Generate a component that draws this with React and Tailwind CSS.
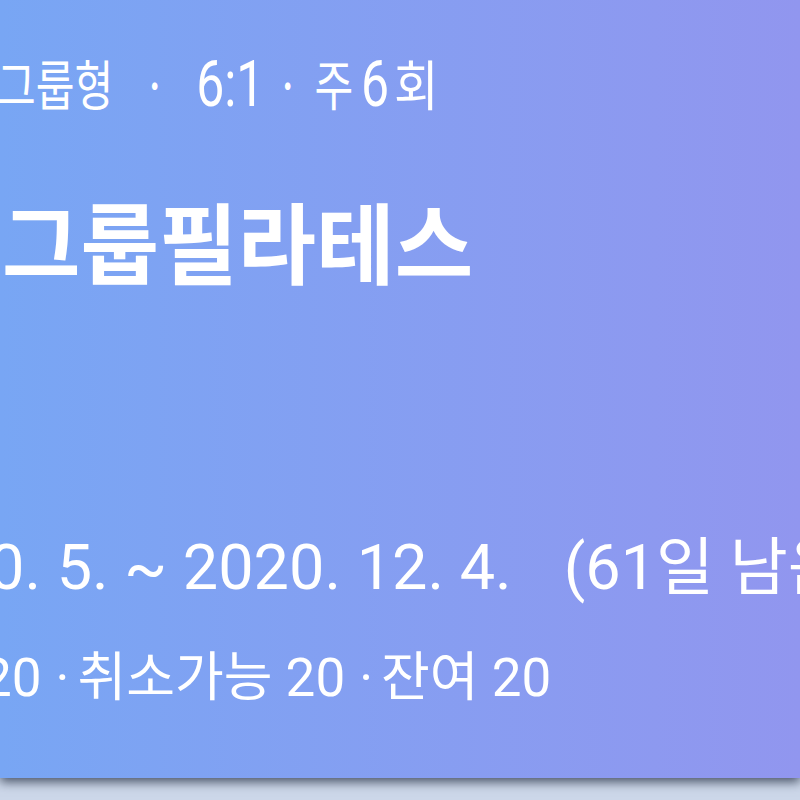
import React from 'react';

const Dot = ({ className }) => <span className={className}>·</span>;

const ClassCard = () => {
  return (
    <div className="w-[800px] h-[800px] overflow-hidden bg-[#ccd7e9]">
      <div className="relative h-[778px] bg-linear-to-r from-[#78a6f4] to-[#9196ef] shadow-[0_4px_10px_rgba(30,40,60,0.75)] text-white overflow-hidden">
        {/* 수업 정보 */}
        <div className="pt-[53px] ml-[-3px] flex items-baseline font-['Noto_Sans_CJK_KR','Noto_Sans',sans-serif] text-[54px] leading-none whitespace-nowrap origin-left scale-x-[0.78]">
          <span>그룹형</span>
          <Dot className="ml-[38px]" />
          <span className="ml-[38px] font-['Roboto','Noto_Sans_CJK_KR',sans-serif] text-[64px]">6:1</span>
          <Dot className="ml-[15px]" />
          <span className="ml-[19px]">주</span>
          <span className="ml-[10px] font-['Roboto','Noto_Sans_CJK_KR',sans-serif] text-[64px]">6</span>
          <span className="ml-[6px] scale-x-[1.15] origin-left inline-block">회</span>
        </div>

        {/* 수업명 */}
        <div className="mt-[78px] ml-[2px] font-['Noto_Sans_CJK_KR','Noto_Sans',sans-serif] text-[88px] font-bold leading-none whitespace-nowrap origin-left scale-x-[0.97]">
          그룹필라테스
        </div>

        {/* 기간 */}
        <div className="mt-[253px] ml-[-11px] flex font-['Roboto','Noto_Sans_CJK_KR',sans-serif] text-[63px] leading-none whitespace-nowrap">
          <span>0. 5. ~ 2020. 12. 4.</span>
          <span className="ml-[52px]">(61일 남음)</span>
        </div>

        {/* 인원 */}
        <div className="mt-[53px] ml-[-18px] font-['Roboto','Noto_Sans_CJK_KR',sans-serif] text-[53px] leading-none whitespace-nowrap">
          <span>20</span>
          <Dot className="ml-[14px] mr-[8px]" />
          <span>취소가능 20</span>
          <Dot className="ml-[14px] mr-[8px]" />
          <span>잔여 20</span>
        </div>
      </div>
    </div>
  );
};

export default function App() {
  return <ClassCard />;
}
